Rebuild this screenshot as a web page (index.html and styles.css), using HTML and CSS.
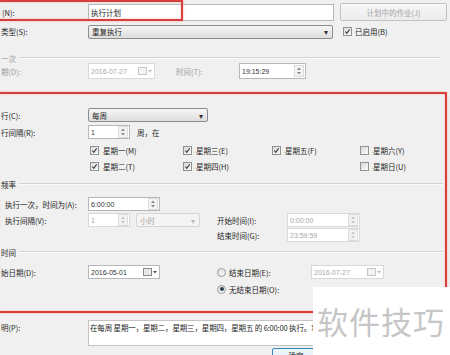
FILE: index.html
```html
<!DOCTYPE html>
<html lang="zh-CN">
<head>
    <meta charset="UTF-8">
    <title>新建作业计划</title>
    <link rel="stylesheet" href="styles.css">
</head>
<body>
<div class="dialog">
    <!-- name -->
    <div class="row r-name">
        <div class="lbl">(N):</div>
        <div class="field name-field">执行计划</div>
        <div class="btn btn-dis">计划中的作业(J)</div>
    </div>

    <!-- type -->
    <div class="row r-type">
        <div class="lbl">类型(S):</div>
        <div class="select type-select">重复执行<span class="arrow">▾</span></div>
        <span class="cb checked"><svg viewBox="0 0 8 8"><polyline points="1.5,4 3.2,6 6.5,1.5"/></svg></span>
        <span class="cb-text">已启用(B)</span>
    </div>

    <!-- one time -->
    <div class="group-head h-once dim"><span>一次</span><i></i></div>
    <div class="row r-date dim">
        <div class="lbl">期(D):</div>
        <div class="field dis w67">2016-07-27<span class="cal"><svg viewBox="0 0 14 8"><rect x="0.5" y="0.5" width="8" height="7"/><path d="M10 3h4l-2 2.5z"/></svg></span></div>
        <div class="lbl2 once-time">时间(T):</div>
        <div class="field w67">19:15:29<span class="spin"><svg viewBox="0 0 7 10"><path d="M3.5 1.5l2 2.5h-4zM3.5 8.5l2-2.5h-4z"/></svg></span></div>
    </div>

    <!-- frequency -->
    <div class="row r-run">
        <div class="lbl">行(C):</div>
        <div class="select w120">每周<span class="arrow">▾</span></div>
    </div>
    <div class="row r-every">
        <div class="lbl">行间隔(R):</div>
        <div class="field w42">1<span class="spin"><svg viewBox="0 0 7 10"><path d="M3.5 1.5l2 2.5h-4zM3.5 8.5l2-2.5h-4z"/></svg></span></div>
        <span class="unit">周，在</span>
    </div>
    <div class="week">
        <label class="day"><span class="cb checked"><svg viewBox="0 0 8 8"><polyline points="1.5,4 3.2,6 6.5,1.5"/></svg></span>星期一(M)</label>
        <label class="day"><span class="cb checked"><svg viewBox="0 0 8 8"><polyline points="1.5,4 3.2,6 6.5,1.5"/></svg></span>星期三(E)</label>
        <label class="day"><span class="cb checked"><svg viewBox="0 0 8 8"><polyline points="1.5,4 3.2,6 6.5,1.5"/></svg></span>星期五(F)</label>
        <label class="day"><span class="cb"></span>星期六(Y)</label>
        <label class="day"><span class="cb checked"><svg viewBox="0 0 8 8"><polyline points="1.5,4 3.2,6 6.5,1.5"/></svg></span>星期二(T)</label>
        <label class="day"><span class="cb checked"><svg viewBox="0 0 8 8"><polyline points="1.5,4 3.2,6 6.5,1.5"/></svg></span>星期四(H)</label>
        <span></span>
        <label class="day"><span class="cb"></span>星期日(U)</label>
    </div>

    <!-- daily frequency -->
    <div class="group-head h-freq"><span>频率</span><i></i></div>
    <div class="row r-once">
        <div class="lbl ind">执行一次，时间为(A):</div>
        <div class="field w72">6:00:00<span class="spin"><svg viewBox="0 0 7 10"><path d="M3.5 1.5l2 2.5h-4zM3.5 8.5l2-2.5h-4z"/></svg></span></div>
    </div>
    <div class="row r-interval">
        <div class="lbl ind">执行间隔(V):</div>
        <div class="field dis w42">1<span class="spin"><svg viewBox="0 0 7 10"><path d="M3.5 1.5l2 2.5h-4zM3.5 8.5l2-2.5h-4z"/></svg></span></div>
        <div class="select dis w64">小时<span class="arrow">▾</span></div>
        <div class="lbl2 right-lbl">开始时间(I):</div>
        <div class="field dis w73">0:00:00<span class="spin"><svg viewBox="0 0 7 10"><path d="M3.5 1.5l2 2.5h-4zM3.5 8.5l2-2.5h-4z"/></svg></span></div>
    </div>
    <div class="row r-end">
        <div class="push"></div>
        <div class="lbl2 right-lbl">结束时间(G):</div>
        <div class="field dis w73">23:59:59<span class="spin"><svg viewBox="0 0 7 10"><path d="M3.5 1.5l2 2.5h-4zM3.5 8.5l2-2.5h-4z"/></svg></span></div>
    </div>

    <!-- duration -->
    <div class="group-head h-dur"><span>时间</span><i></i></div>
    <div class="row r-start">
        <div class="lbl">始日期(D):</div>
        <div class="field w72">2016-05-01<span class="cal"><svg viewBox="0 0 14 8"><rect x="0.5" y="0.5" width="8" height="7"/><path d="M10 3h4l-2 2.5z"/></svg></span></div>
        <span class="rb"></span>
        <div class="lbl2 radio-lbl">结束日期(E):</div>
        <div class="field dis w73">2016-07-27<span class="cal"><svg viewBox="0 0 14 8"><rect x="0.5" y="0.5" width="8" height="7"/><path d="M10 3h4l-2 2.5z"/></svg></span></div>
    </div>
    <div class="row r-noend">
        <div class="push"></div>
        <span class="rb on"></span>
        <div class="lbl2">无结束日期(O):</div>
    </div>

    <!-- summary -->
    <div class="r-desc">
        <div class="lbl">明(P):</div>
        <div class="desc">在每周 星期一，星期二，星期三，星期四，星期五 的 6:00:00 执行。将</div>
    </div>
    <div class="r-buttons">
        <div class="btn btn-ok">确定</div>
    </div>

    <!-- annotations on top of the screenshot -->
    <div class="mark mark-name"></div>
    <div class="mark mark-freq"></div>
    <div class="watermark">软件技巧</div>
</div>
</body>
</html>
```

FILE: styles.css
```css
body {
    margin: 0;
    background-color: #f0f0f0;
    font-family: "Noto Sans CJK SC", "Liberation Sans", sans-serif;
    font-size: 7.5px;
    color: #1e1e1e;
}

.dialog {
    position: relative;
    width: 450px;
    height: 355px;
    overflow: hidden;
    padding-top: 3px;
    box-sizing: border-box;
}

.row {
    display: flex;
    align-items: center;
    height: 14px;
}

.lbl {
    width: 87px;
    padding-left: 1px;
    flex: none;
    white-space: nowrap;
}
.lbl.ind { padding-left: 5px; width: 83px; }
.lbl2 { white-space: nowrap; }
.push { width: 217px; flex: none; }

.dim { color: #9c9c9c; }

/* inputs */
.field {
    height: 14px;
    box-sizing: border-box;
    border: 1px solid #b5b7bd;
    background: #fff;
    display: flex;
    align-items: center;
    padding-left: 2px;
    font-family: "Liberation Sans", sans-serif;
    font-size: 7px;
    color: #333;
    flex: none;
}
.field.dis {
    border-color: #d9d9d9;
    color: #a8a8a8;
}
.w42 { width: 42px; }
.w67 { width: 67px; }
.w72 { width: 72px; }
.w73 { width: 73px; }
.w64 { width: 64px; }
.w120 { width: 120px; }

.name-field {
    width: 246px;
    height: 17px;
    font-family: "Noto Sans CJK SC", sans-serif;
    font-size: 7.5px;
    color: #1e1e1e;
}

.spin {
    margin-left: auto;
    margin-right: 1px;
    width: 8px;
    height: 10px;
    border: 1px solid #dcdcdc;
    background: #f3f3f3;
}
.spin svg { display: block; width: 8px; height: 10px; fill: #8a8a8a; }
.dis .spin svg { fill: #c4c4c4; }

.cal {
    margin-left: auto;
    margin-right: 2px;
    display: flex;
}
.cal svg { width: 14px; height: 8px; }
.cal rect { fill: #e9e9e9; stroke: #8a8a8a; stroke-width: 1; }
.cal path { fill: #555; }
.dis .cal rect { stroke: #c8c8c8; fill: #f3f3f3; }
.dis .cal path { fill: #bbb; }

.select {
    height: 14px;
    box-sizing: border-box;
    border: 1px solid #8c8c8c;
    border-radius: 2px;
    background: linear-gradient(#f6f6f6, #dedede);
    display: flex;
    align-items: center;
    padding: 0 4px 0 3px;
    flex: none;
}
.select.dis {
    border-color: #d5d5d5;
    background: #f4f4f4;
    color: #a8a8a8;
    margin-left: 6px;
}
.arrow { margin-left: auto; font-size: 8px; color: #333; }
.select.dis .arrow { color: #bbb; }

.type-select { width: 245px; }

/* check boxes and radios */
.cb {
    width: 9px;
    height: 9px;
    box-sizing: border-box;
    border: 1px solid #929292;
    background: linear-gradient(135deg, #dcdcdc, #fafafa);
    display: inline-flex;
    flex: none;
}
.cb svg { width: 7px; height: 7px; fill: none; stroke: #3c3c3c; stroke-width: 1.3; }

.rb {
    width: 9px;
    height: 9px;
    box-sizing: border-box;
    border: 1px solid #9a9a9a;
    border-radius: 50%;
    background: linear-gradient(135deg, #dcdcdc, #fafafa);
    margin-right: 3px;
    display: flex;
    align-items: center;
    justify-content: center;
    flex: none;
}
.rb.on::after {
    content: "";
    width: 4px;
    height: 4px;
    border-radius: 50%;
    background: #2f3f4f;
}

/* buttons */
.btn {
    box-sizing: border-box;
    display: flex;
    align-items: center;
    justify-content: center;
    border-radius: 2px;
}
.btn-dis {
    width: 107px;
    height: 18px;
    margin-left: 6px;
    border: 1px solid #c2c2c2;
    background: linear-gradient(#f7f7f7, #ececec);
    color: #a4a4a4;
}
.btn-ok {
    width: 48px;
    height: 20px;
    margin-left: 272px;
    border: 1px solid #3a86b9;
    background: linear-gradient(#eef6fb, #d8ebf6);
    align-items: flex-start;
    padding-top: 1px;
}

/* group headers */
.group-head {
    display: flex;
    align-items: center;
    height: 12px;
    width: 443px;
}
.group-head span { white-space: nowrap; margin: 0 3px 0 1px; }
.group-head i {
    flex: 1;
    height: 0;
    border-top: 1px solid #d3d3d3;
    border-bottom: 1px solid #fbfbfb;
}

/* rows */
.r-name { height: 18px; }
.r-name .lbl { padding-left: 2px; width: 86px; }
.r-type { margin-top: 3px; height: 15px; }
.r-type .cb { margin-left: 10px; }
.cb-text { margin-left: 3px; }

.h-once { margin-top: 13px; width: 440px; }
.r-date { margin-top: -1px; height: 16px; }
.r-date .field { height: 16px; }
.once-time { margin-left: 21px; width: 63px; }

.r-run { margin-top: 29px; }
.r-every { margin-top: 3px; }
.unit { margin-left: 7px; }

.week {
    margin-top: 4px;
    margin-left: 90px;
    display: grid;
    grid-template-columns: 93px 89px 88px auto;
    grid-auto-rows: 14px;
    row-gap: 2px;
}
.day { display: flex; align-items: center; white-space: nowrap; }
.day .cb { margin-right: 4px; }

.h-freq { margin-top: 5px; }
.r-once { margin-top: 7px; }
.r-interval { margin-top: 2px; }
.r-end { margin-top: 1px; }
.right-lbl { width: 70px; flex: none; }
.r-interval .right-lbl { margin-left: 17px; }

.h-dur { margin-top: 4px; }
.r-start { margin-top: 7px; }
.r-start .rb { margin-left: 57px; }
.radio-lbl { width: 82px; flex: none; }
.r-noend { margin-top: 3px; }

.r-desc {
    margin-top: 24px;
    display: flex;
    align-items: flex-start;
}
.r-desc .lbl { margin-top: 2px; }
.desc {
    width: 226px;
    height: 26px;
    flex: none;
    box-sizing: border-box;
    border: 1px solid #c4c4c4;
    background: #fff;
    padding: 1px 1px;
    font-size: 7.5px;
    letter-spacing: -0.15px;
    white-space: nowrap;
    overflow: hidden;
}
.r-buttons { margin-top: 2px; display: flex; }

/* red annotation frames and watermark */
.mark {
    position: absolute;
    border: 2px solid #d8403b;
    box-shadow: 0 0 2px #f2a9a6, inset 0 0 2px #f2a9a6;
}
.mark-name {
    left: -3px;
    top: 0;
    width: 182px;
    height: 17px;
}
.mark-freq {
    left: -3px;
    top: 92px;
    width: 446px;
    height: 217px;
}

.watermark {
    position: absolute;
    left: 313px;
    top: 287px;
    width: 137px;
    height: 68px;
    background: #fff;
    color: #c6c6c6;
    font-size: 31px;
    line-height: 68px;
    text-indent: 4px;
    white-space: nowrap;
    letter-spacing: 1px;
}
```
